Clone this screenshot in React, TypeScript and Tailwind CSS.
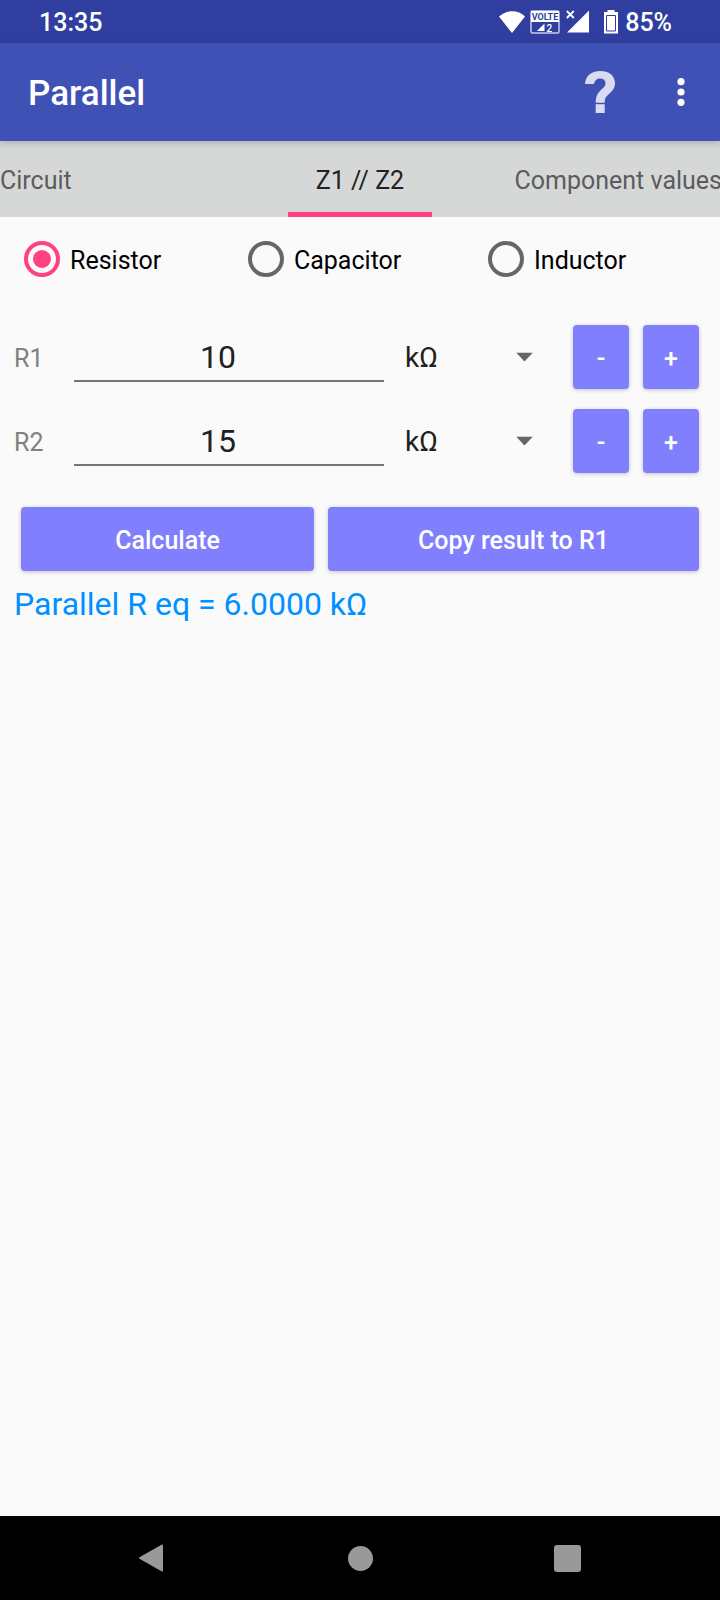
import { useState } from 'react';

const kinds = [
    { name: 'Resistor', symbol: 'R', units: ['Ω', 'kΩ', 'MΩ'] },
    { name: 'Capacitor', symbol: 'C', units: ['pF', 'nF', 'µF'] },
    { name: 'Inductor', symbol: 'L', units: ['µH', 'mH', 'H'] },
];

const buttonStyle = 'h-16 rounded bg-[#8080ff] pt-1 text-[25px] font-medium text-white shadow-[0_1px_4px_rgba(0,0,0,0.22)]';

function StatusBar() {
    return (
        <div className="flex h-[43px] items-center justify-between bg-[#303f9f] pl-[39px] pr-12 text-[25px] font-medium text-white">
            <span className="pt-0.5">13:35</span>
            <div className="flex items-center">
                <svg className="h-6 w-[26px]" viewBox="0 0 26 24" fill="#fff">
                    <path d="M13 23 0 6.500C3.500 3.200 8 1.300 13 1.300S22.500 3.200 26 6.500Z" />
                </svg>
                <svg className="ml-[5px] h-6 w-[30px]" viewBox="0 0 30 24">
                    <rect x="1" y="1" width="28" height="22" rx="1.500" fill="none" stroke="#c5caec" strokeWidth="1.500" />
                    <rect x="1" y="1" width="28" height="11" fill="#fff" />
                    <text x="15" y="10" textAnchor="middle" fontSize="9" fontWeight="700" fill="#303f9f">VOLTE</text>
                    <path d="M7 21h7.500v-7.500Z" fill="#fff" />
                    <text x="16.500" y="21.500" fontSize="10" fontWeight="500" fill="#fff">2</text>
                </svg>
                <svg className="ml-1.5 h-6 w-6" viewBox="0 0 24 24">
                    <path d="M1 22.500h22V.500Z" fill="#fff" />
                    <path d="m.800 1 7 7m0-7-7 7" stroke="#fff" strokeWidth="1.800" />
                </svg>
                <svg className="ml-3.5 h-6 w-3.5" viewBox="0 0 14 24">
                    <path d="M3.500 0h7v2H14v21.500H0V2h3.500Z" fill="#fff" />
                    <path d="M2.500 5.500h9v15.500h-9Z" fill="none" stroke="#303f9f" />
                </svg>
                <span className="ml-[7px] pt-0.5">85%</span>
            </div>
        </div>
    );
}

function AppBar() {
    return (
        <header className="relative z-10 flex h-[98px] items-center bg-[#3f51b5] pl-7 pr-[35px] text-white shadow-[0_2px_6px_rgba(0,0,0,0.2)]">
            <h1 className="flex-1 pt-1 text-[35px] font-medium">Parallel</h1>
            <button aria-label="Help">
                <svg className="h-11 w-8" viewBox="0 0 32 44" fill="#d9dcf0">
                    <path d="M2 14C2.500 6 8.500 1 17 1c9 0 15 4.500 15 12.500 0 4.500-2.500 7.500-6 10.500-3 2.700-4.300 4-4.300 8.800h-9c0-6.300 1.800-9.300 4.800-12.300 2.500-2.500 5-4 5-7 0-3.300-2-5-5.500-5-3.500 0-5.500 2-6 5.500Z" />
                    <path d="M12.700 34.200h9V43h-9Z" />
                </svg>
            </button>
            <button aria-label="More options" className="ml-[62px]">
                <svg className="h-7 w-2" viewBox="0 0 8 28" fill="#fff">
                    <circle cx="4" cy="3.700" r="3.600" />
                    <circle cx="4" cy="14" r="3.600" />
                    <circle cx="4" cy="24.300" r="3.600" />
                </svg>
            </button>
        </header>
    );
}

function Tabs() {
    return (
        <nav className="grid h-19 grid-cols-[1fr_144px_1fr] overflow-hidden bg-[#d6d8d7] text-[25px] text-[#5b5c5c]">
            <a href="#circuit" className="flex items-center pt-1">Circuit</a>
            <a href="#parallel" className="flex items-center justify-center border-b-[5px] border-[#ff4081] pt-[9px] text-[#212121]">
                Z1 // Z2
            </a>
            <a href="#values" className="-mr-0.5 flex items-center justify-end whitespace-nowrap pt-1">Component values</a>
        </nav>
    );
}

type RowProps = {
    label: string;
    units: string[];
    value: number;
    onChange: (value: number) => void;
};

function ValueRow({ label, units, value, onChange }: RowProps) {
    return (
        <div className="flex h-16 items-center">
            <label htmlFor={label} className="w-[60px] pt-1 text-[25px] text-[#808080]">{label}</label>
            <input
                id={label}
                inputMode="decimal"
                value={value}
                onChange={(e) => onChange(Number(e.target.value) || 0)}
                className="h-[50px] min-w-0 flex-1 border-b-2 border-[#757575] bg-transparent pr-[22px] pt-0.5 text-center text-[32px] text-[#212121] outline-none"
            />
            <div className="relative ml-[21px] w-[135px]">
                <select
                    aria-label={`${label} unit`}
                    defaultValue={units[1]}
                    className="w-full appearance-none bg-transparent pt-0.5 text-[28px] text-[#212121] outline-none"
                >
                    {units.map((unit) => (
                        <option key={unit}>{unit}</option>
                    ))}
                </select>
                <svg className="pointer-events-none absolute right-[7px] top-1/2 h-[9px] w-[17px] -translate-y-1/2" viewBox="0 0 17 9">
                    <path d="M0 0h17L8.500 9Z" fill="#666" />
                </svg>
            </div>
            <div className="ml-[33px] flex gap-3.5">
                <button className={`${buttonStyle} w-14`} onClick={() => onChange(value - 1)}>-</button>
                <button className={`${buttonStyle} w-14`} onClick={() => onChange(value + 1)}>+</button>
            </div>
        </div>
    );
}

export default function App() {
    const [kind, setKind] = useState(kinds[0]);
    const [first, setFirst] = useState(10);
    const [second, setSecond] = useState(15);
    const [result, setResult] = useState(6);

    // Capacitors in parallel add up, the other two divide
    const calculate = () => {
        const adds = kind.symbol === 'C';
        setResult(adds ? first + second : (first * second) / (first + second));
    };

    return (
        <div className="flex min-h-screen flex-col bg-[#fafafa] font-[Roboto,sans-serif]">
            <StatusBar />
            <AppBar />
            <Tabs />

            <main className="flex-1">
                <div className="flex h-[84px] items-center pl-6 pr-[7px]">
                    {kinds.map((item) => (
                        <label key={item.name} className="flex flex-auto items-center gap-2.5 text-[25px] text-black">
                            <input
                                type="radio"
                                name="kind"
                                checked={item.name === kind.name}
                                onChange={() => setKind(item)}
                                className="flex size-9 appearance-none items-center justify-center rounded-full border-4 border-[#666] checked:border-[#ff4081] checked:after:size-[18px] checked:after:rounded-full checked:after:bg-[#ff4081]"
                            />
                            <span className="pt-1">{item.name}</span>
                        </label>
                    ))}
                </div>

                <div className="flex flex-col gap-5 pl-3.5 pr-[21px] pt-6">
                    <ValueRow key={`${kind.symbol}1`} label={`${kind.symbol}1`} units={kind.units} value={first} onChange={setFirst} />
                    <ValueRow key={`${kind.symbol}2`} label={`${kind.symbol}2`} units={kind.units} value={second} onChange={setSecond} />
                </div>

                <div className="flex gap-3.5 px-[21px] pt-[34px]">
                    <button className={`${buttonStyle} flex-[293]`} onClick={calculate}>Calculate</button>
                    <button className={`${buttonStyle} flex-[371]`} onClick={() => setFirst(result)}>
                        Copy result to {kind.symbol}1
                    </button>
                </div>

                <output className="block px-3.5 pt-[13px] text-[32px] leading-10 text-[#0090ff]">
                    {`Parallel ${kind.symbol} eq = ${result.toFixed(4)} ${kind.units[1]}`}
                </output>
            </main>

            <footer className="flex h-21 items-center justify-between bg-black pl-[138px] pr-[139px]">
                <button aria-label="Back">
                    <svg className="h-7 w-7" viewBox="0 0 28 28">
                        <path d="M2 14 24 1.500v25Z" fill="#999" stroke="#999" strokeWidth="2" strokeLinejoin="round" />
                    </svg>
                </button>
                <button aria-label="Home" className="size-[25px] rounded-full bg-[#999]" />
                <button aria-label="Recent apps" className="size-[27px] rounded-[3px] bg-[#999]" />
            </footer>
        </div>
    );
}
